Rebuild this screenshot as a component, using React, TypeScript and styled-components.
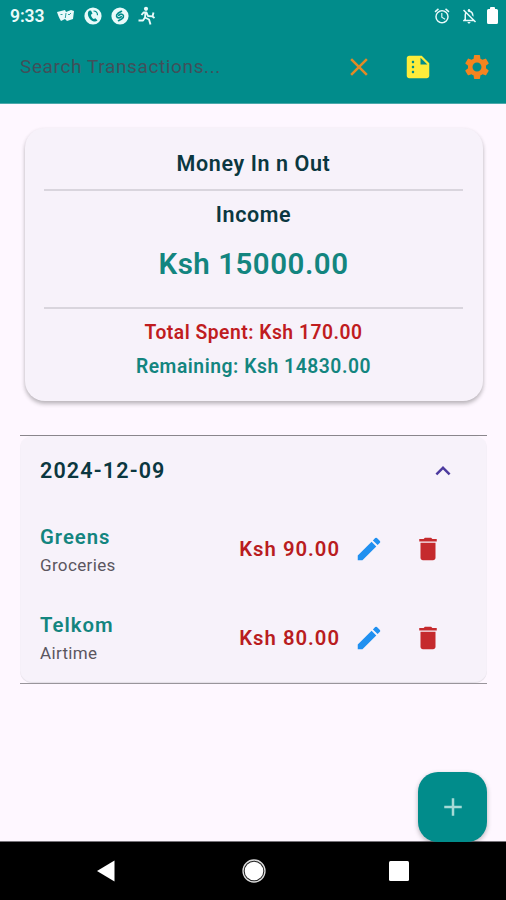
import React from "react";
import styled, { createGlobalStyle } from "styled-components";
import {
  MdClose, MdSummarize, MdSettings, MdEdit, MdDelete, MdAdd, MdExpandLess,
  MdOutlineAlarm, MdOutlineNotificationsOff,
} from "react-icons/md";

const GlobalStyle = createGlobalStyle`
  *, *::before, *::after { box-sizing: border-box; }
  body { margin: 0; background: #fef7ff; font-family: Roboto, sans-serif; }
`;

const Screen = styled.div`
  width: 506px;
  height: 900px;
  display: flex;
  flex-direction: column;
  overflow: hidden;
  background: #fef7ff;
`;

const Header = styled.header`
  height: 104px;
  flex: none;
  background: #018c8b;
  border-bottom: 1px solid #4ba9ab;
`;

const StatusBar = styled.div`
  height: 31px;
  display: flex;
  align-items: center;
  justify-content: space-between;
  padding: 0 8px 0 10px;
  color: #e9fafa;
`;

const StatusGroup = styled.div<{ $gap: number }>`
  display: flex;
  align-items: center;
  gap: ${(p) => p.$gap}px;
  svg { display: block; }
`;

const AlertIcons = styled(StatusGroup)`
  margin-left: auto;
`;

const Clock = styled.span`
  font-size: 17.5px;
  font-weight: 600;
  line-height: 20px;
  letter-spacing: -0.1px;
  width: 37px;
  padding-top: 1px;
`;

const SearchBar = styled.div`
  height: 72px;
  display: flex;
  align-items: center;
  padding: 0 14px 0 20px;
`;

const SearchHint = styled.span`
  flex: 1;
  font-size: 19px;
  line-height: 24px;
  letter-spacing: 0.62px;
  color: #40505a;
  white-space: nowrap;
`;

const Actions = styled.div`
  display: flex;
  gap: 29px;
`;

const IconButton = styled.button<{ $color: string }>`
  display: flex;
  padding: 0;
  border: 0;
  background: none;
  color: ${(p) => p.$color};
  font-size: 30px;
`;

const Content = styled.main`
  flex: 1;
  padding: 24px 19px 0 20px;
  display: flex;
  flex-direction: column;
`;

const SummaryCard = styled.section`
  height: 273px;
  margin: 0 4px 0 5px;
  padding: 20px 20px 0 19px;
  border-radius: 20px;
  background: #f7f2fa;
  box-shadow: 0 3px 4px rgba(0, 0, 0, 0.24), 0 1px 4px rgba(0, 0, 0, 0.06);
  display: flex;
  flex-direction: column;
  text-align: center;
`;

const Line = styled.p<{ $size: number; $height: number; $color: string; $track: number }>`
  margin: 0;
  font-weight: 600;
  font-size: ${(p) => p.$size}px;
  line-height: ${(p) => p.$height}px;
  letter-spacing: ${(p) => p.$track}px;
  color: ${(p) => p.$color};
  white-space: nowrap;
`;

const Rule = styled.hr<{ $before: number; $after: number }>`
  flex: none;
  width: 100%;
  height: 2px;
  border: 0;
  margin: ${(p) => p.$before}px 0 ${(p) => p.$after}px;
  background: #d9d5dd;
`;

const DayPanel = styled.section`
  margin-top: 34px;
  height: 249px;
  border-top: 1px solid #8a868c;
  border-bottom: 1px solid #99959b;
`;

const DayBody = styled.div`
  height: 247px;
  border-radius: 12px;
  background: #f7f2fa;
  box-shadow: inset 0 -1px 1px rgba(0, 0, 0, 0.08);
`;

const DayHeader = styled.div`
  height: 69px;
  padding: 0 29px 0 20px;
  display: flex;
  align-items: center;
  justify-content: space-between;
`;

const Row = styled.div`
  height: 88.5px;
  padding: 0 44px 0 20px;
  display: flex;
  align-items: center;
`;

const Labels = styled.div`
  flex: 1;
  padding-top: 2px;
`;

const Category = styled.p`
  margin: 1px 0 2px;
  font-size: 17px;
  line-height: 24px;
  letter-spacing: 0.35px;
  color: #5b565f;
`;

const RowActions = styled.div`
  display: flex;
  gap: 29px;
  margin-left: 14px;
`;

const Fab = styled.button`
  position: absolute;
  left: 418px;
  top: 772px;
  width: 69px;
  height: 70px;
  display: flex;
  align-items: center;
  justify-content: center;
  border: 0;
  border-radius: 20px;
  background: #018c8b;
  color: #a5dad6;
  font-size: 30px;
  box-shadow: 0 2px 5px rgba(0, 0, 0, 0.28);
`;

const NavBar = styled.nav`
  height: 59px;
  flex: none;
  background: #000;
  border-top: 1px solid #77737a;
  display: flex;
  align-items: center;
  padding-left: 96px;
`;

const NavIcon = styled.svg<{ $gap: number }>`
  display: block;
  margin-right: ${(p) => p.$gap}px;
`;

const CardsIcon = () => (
  <svg width="19" height="16" viewBox="0 0 19 16">
    <path d="M1 4l8-2 1 2 5-2 3 1-1 8-6 2-2-2-4 2c-2-3-3-6-4-9z" fill="currentColor" />
    <path d="M10 5l-.700 5M4.500 6.500l2 0M12 6l1 1 2-2" stroke="#018c8b" strokeWidth=".8" fill="none" />
  </svg>
);

const PhoneIcon = () => (
  <svg width="18" height="18" viewBox="0 0 18 18">
    <circle cx="9" cy="9" r="8.6" fill="currentColor" />
    <path d="M5 3.7C2.8 6 4 10.5 7 13c2.600 2 5 2 6.500.5l-2-2.300-1.800.8C8 11 7 9.300 7 7.700l1.500-1.200L7 3.500z" fill="#018c8b" />
    <path d="M9.500 4c2.500.1 4 1.700 4 4.200" stroke="#018c8b" strokeWidth="1.200" fill="none" />
  </svg>
);

const ShazamIcon = () => (
  <svg width="18" height="18" viewBox="0 0 18 18">
    <circle cx="9" cy="9" r="8.6" fill="currentColor" />
    <path d="M10.500 4.300L7 6.300C4.500 8 5.300 10.800 8 11l2.300-1.300M7.500 13.700l3.500-2C13.500 10 12.700 7.200 10 7L7.700 8.300" stroke="#018c8b" strokeWidth="1.600" fill="none" strokeLinecap="round" />
  </svg>
);

const RunnerIcon = () => (
  <svg width="18" height="20" viewBox="0 0 18 20">
    <circle cx="8" cy="2.800" r="2.100" fill="currentColor" />
    <path d="M3.500 9l2-2.500 3 0 1.500 3.500 4 .4M7.500 6.500L7 11.500l4 2 1.500 5M7 11.500L5 14.500H.5M15.500 6.500l-1 4 2 1.500" stroke="currentColor" strokeWidth="1.900" fill="none" strokeLinejoin="round" />
  </svg>
);

const Battery = () => (
  <svg width="11" height="18" viewBox="0 0 11 18">
    <path d="M3 1a1 1 0 011-1h3a1 1 0 011 1v1h1.500A1.500 1.500 0 0111 3.500v12A1.500 1.500 0 019.500 17h-8A1.500 1.500 0 010 15.500v-12A1.500 1.500 0 011.500 2H3z" fill="#fff" />
  </svg>
);

const transactions = [
  { name: "Greens", category: "Groceries", amount: "Ksh 90.00" },
  { name: "Telkom", category: "Airtime", amount: "Ksh 80.00" },
];

export default function App() {
  return (
    <>
      <GlobalStyle />
      <Screen>
        <Header>
          <StatusBar>
            <StatusGroup $gap={9}>
              <Clock>9:33</Clock>
              <CardsIcon />
              <PhoneIcon />
              <ShazamIcon />
              <RunnerIcon />
            </StatusGroup>
            <AlertIcons $gap={9}>
              <MdOutlineAlarm size={18} />
              <MdOutlineNotificationsOff size={18} />
              <Battery />
            </AlertIcons>
          </StatusBar>
          <SearchBar>
            <SearchHint>Search Transactions...</SearchHint>
            <Actions>
              <IconButton $color="#e38a25"><MdClose /></IconButton>
              <IconButton $color="#fdec3a"><MdSummarize /></IconButton>
              <IconButton $color="#f5841f"><MdSettings /></IconButton>
            </Actions>
          </SearchBar>
        </Header>
        <Content>
          <SummaryCard>
            <Line $size={21.5} $height={32} $color="#0b3740" $track={0.6}>Money In n Out</Line>
            <Rule $before={9} $after={9} />
            <Line $size={21.5} $height={30} $color="#0b3740" $track={0.6}>Income</Line>
            <Line $size={29.5} $height={69} $color="#13857f" $track={0.5}>Ksh 15000.00</Line>
            <Rule $before={8} $after={7} />
            <Line $size={19.3} $height={34} $color="#c01c1f" $track={0.5}>Total Spent: Ksh 170.00</Line>
            <Line $size={19.3} $height={34} $color="#13857f" $track={0.55}>Remaining: Ksh 14830.00</Line>
          </SummaryCard>
          <DayPanel>
            <DayBody>
              <DayHeader>
                <Line $size={21.5} $height={30} $color="#0b3740" $track={1.15}>2024-12-09</Line>
                <IconButton $color="#4c3a9e"><MdExpandLess /></IconButton>
              </DayHeader>
              {transactions.map((t) => (
                <Row key={t.name}>
                  <Labels>
                    <Line $size={20.3} $height={30} $color="#13857f" $track={1}>{t.name}</Line>
                    <Category>{t.category}</Category>
                  </Labels>
                  <Line $size={20.3} $height={30} $color="#b91c20" $track={1}>{t.amount}</Line>
                  <RowActions>
                    <IconButton $color="#2090f0"><MdEdit /></IconButton>
                    <IconButton $color="#c52a2d"><MdDelete /></IconButton>
                  </RowActions>
                </Row>
              ))}
            </DayBody>
          </DayPanel>
        </Content>
        <NavBar>
          <NavIcon $gap={127} width="19" height="22" viewBox="0 0 19 22">
            <path d="M1 11L18.500 .5v21z" fill="#fff" />
          </NavIcon>
          <NavIcon $gap={123} width="24" height="24" viewBox="0 0 24 24">
            <circle cx="12" cy="12" r="11" fill="#222" stroke="#ddd" strokeWidth="1.300" />
            <circle cx="12" cy="12" r="9.300" fill="#fff" />
          </NavIcon>
          <NavIcon $gap={0} width="20" height="20" viewBox="0 0 20 20">
            <rect width="20" height="20" rx="1.500" fill="#fff" />
          </NavIcon>
        </NavBar>
        <Fab><MdAdd /></Fab>
      </Screen>
    </>
  );
}
